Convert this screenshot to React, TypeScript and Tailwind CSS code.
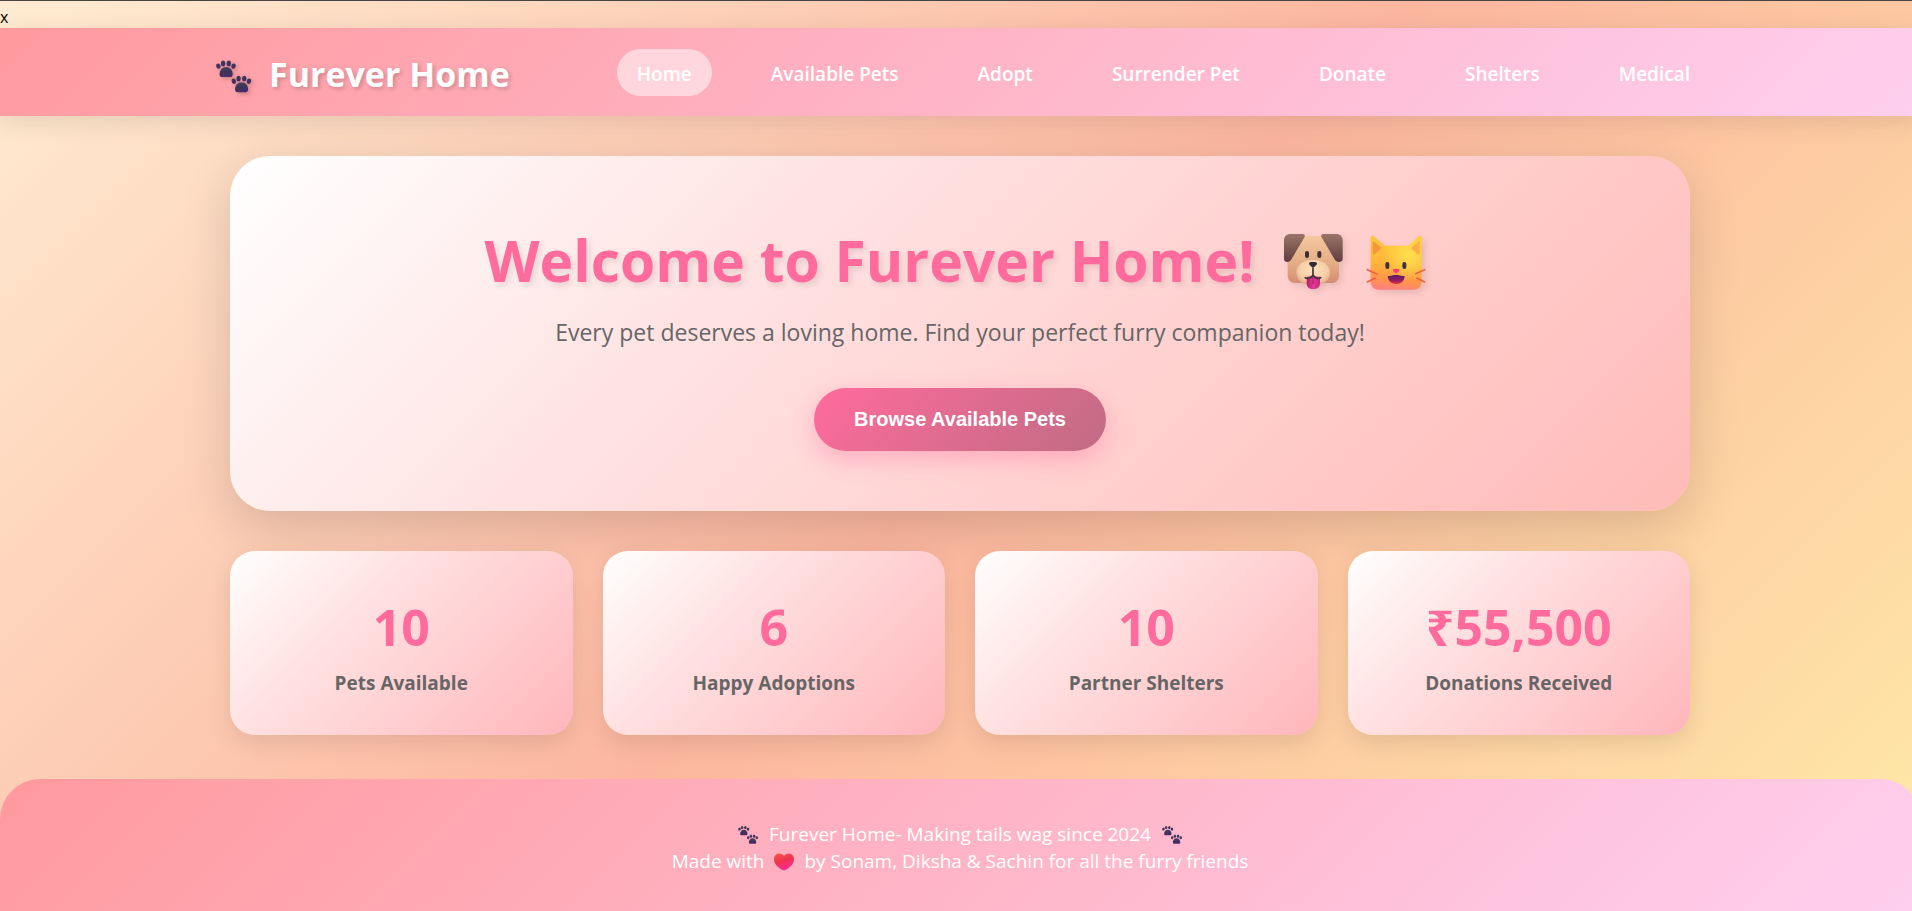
import React, { useState } from "react";

const navItems = [
  { id: "home", label: "Home" },
  { id: "pets", label: "Available Pets" },
  { id: "adopt", label: "Adopt" },
  { id: "surrender", label: "Surrender Pet" },
  { id: "donate", label: "Donate" },
  { id: "shelters", label: "Shelters" },
  { id: "medical", label: "Medical" },
];

const stats = [
  { value: "10", label: "Pets Available" },
  { value: "6", label: "Happy Adoptions" },
  { value: "10", label: "Partner Shelters" },
  { value: "₹55,500", label: "Donations Received" },
];

function Paw() {
  return (
    <>
      <ellipse cx="59" cy="63" rx="6.5" ry="8" transform="rotate(-15 59 63)" />
      <ellipse cx="73" cy="55" rx="6.5" ry="8.5" />
      <ellipse cx="90" cy="55" rx="6.5" ry="8.5" />
      <ellipse cx="104" cy="63" rx="6.5" ry="8" transform="rotate(15 104 63)" />
      <path d="M82 66c-12 0-19 9-19.500 21 0 6 3 8.500 8 8.500h23c5 0 8-2.500 8-8.500C101 75 94 66 82 66z" />
    </>
  );
}

function PawPrints({ id, className }: { id: string; className?: string }) {
  return (
    <svg viewBox="46 42 116 104" className={className} aria-hidden="true">
      <defs>
        <linearGradient id={id} x1="0" y1="0" x2="0.3" y2="1">
          <stop offset="0" stopColor="#45415a" />
          <stop offset="0.6" stopColor="#3e3457" />
          <stop offset="1" stopColor="#4b2a6b" />
        </linearGradient>
      </defs>
      <g fill={`url(#${id})`}>
        <Paw />
        <g transform="translate(46 45)">
          <Paw />
        </g>
      </g>
    </svg>
  );
}

function DogFace({ className }: { className?: string }) {
  return (
    <svg viewBox="120 66 198 180" className={className} aria-hidden="true">
      <defs>
        <linearGradient id="dogHead" x1="0" y1="0" x2="0" y2="1">
          <stop offset="0" stopColor="#f5c8a0" />
          <stop offset="0.6" stopColor="#e2ac84" />
          <stop offset="1" stopColor="#d68d72" />
        </linearGradient>
        <radialGradient id="dogMuzzle" cx="0.5" cy="0.4" r="0.6">
          <stop offset="0" stopColor="#ffe2bd" />
          <stop offset="0.7" stopColor="#f6cda5" />
          <stop offset="1" stopColor="#e2a98a" />
        </radialGradient>
        <linearGradient id="dogEar" x1="0" y1="0" x2="0" y2="1">
          <stop offset="0" stopColor="#9a7468" />
          <stop offset="0.5" stopColor="#7f5a53" />
          <stop offset="1" stopColor="#5f3c3e" />
        </linearGradient>
        <linearGradient id="dogTongue" x1="0" y1="0" x2="1" y2="0">
          <stop offset="0" stopColor="#b81d6c" />
          <stop offset="0.5" stopColor="#e23a94" />
          <stop offset="1" stopColor="#c42478" />
        </linearGradient>
      </defs>
      <path d="M176 78h86c22 0 35 16 35 38v80c0 14-8 23-22 23H165c-14 0-22-9-22-23v-80c0-22 11-38 33-38z" fill="url(#dogHead)" />
      <path d="M152 72h35c8 0 9 5 5 12l-39 66c-6 9-21 8-21-4V93c0-14 7-21 20-21z" fill="url(#dogEar)" />
      <path d="M288 72h-37c-8 0-9 5-5 12l39 66c6 9 23 8 23-4V93c0-14-7-21-20-21z" fill="url(#dogEar)" />
      <path d="M219 150c30 0 51 14 51 38 0 23-20 38-51 38s-50-15-50-38c0-24 20-38 50-38z" fill="url(#dogMuzzle)" />
      <rect x="195" y="123" width="12" height="21" rx="6" fill="#3b3038" />
      <rect x="232" y="123" width="12" height="21" rx="6" fill="#3b3038" />
      <path d="M200 200c7 2 14-1 19-7 5 6 13 9 21 7v18c0 12-7 19-20 19s-20-7-20-19z" fill="url(#dogTongue)" />
      <path d="M219 203v18" stroke="#a91663" strokeWidth="3" strokeLinecap="round" />
      <path d="M196 203c9 5 20 0 23-8V175M242 203c-9 5-20 0-23-8" fill="none" stroke="#3b3038" strokeWidth="5" strokeLinecap="round" />
      <path d="M214 156h10c7 0 9 5 5 9l-6 6c-3 3-5 3-8 0l-6-6c-4-4-2-9 5-9z" fill="#332b35" />
    </svg>
  );
}

function CatFace({ className }: { className?: string }) {
  return (
    <svg viewBox="370 66 192 180" className={className} aria-hidden="true">
      <defs>
        <linearGradient id="catHead" x1="0.3" y1="0" x2="0.2" y2="1">
          <stop offset="0" stopColor="#ffc83a" />
          <stop offset="0.5" stopColor="#ffb63a" />
          <stop offset="0.8" stopColor="#ff964a" />
          <stop offset="1" stopColor="#ff7d83" />
        </linearGradient>
        <radialGradient id="catGlow" cx="0.75" cy="0.35" r="0.5">
          <stop offset="0" stopColor="#ffe04f" />
          <stop offset="1" stopColor="#ffe04f" stopOpacity="0" />
        </radialGradient>
        <linearGradient id="catMouth" x1="0" y1="0" x2="0" y2="1">
          <stop offset="0" stopColor="#5c1a68" />
          <stop offset="0.55" stopColor="#8b1c62" />
          <stop offset="1" stopColor="#ef2a3c" />
        </linearGradient>
      </defs>
      <path d="M400 79l31 28h72l31-28c5-4 9-1 9 5v128c0 17-9 27-26 27H416c-17 0-26-10-26-27V84c0-7 5-9 10-5z" fill="url(#catHead)" />
      <path d="M400 79l31 28h72l31-28c5-4 9-1 9 5v128c0 17-9 27-26 27H416c-17 0-26-10-26-27V84c0-7 5-9 10-5z" fill="url(#catGlow)" />
      <path d="M396 92v36c0 5 3 7 7 4l20-18z" fill="#f5963a" />
      <path d="M537 92v36c0 5-3 7-7 4l-20-18z" fill="#ffae45" />
      <rect x="434" y="156" width="12" height="21" rx="6" fill="#43303a" />
      <rect x="485" y="156" width="12" height="21" rx="6" fill="#43303a" />
      <path d="M461 177h11c5 0 5 5 2 8l-5 4c-2 2-3 2-5 0l-5-4c-3-3-3-8 2-8z" fill="#ff3c78" />
      <path d="M441 198c8 0 14-1 18-3h14c5 2 11 3 19 3-1 15-11 24-25 24s-25-9-26-24z" fill="url(#catMouth)" />
      <g stroke="#e8643f" strokeWidth="5" strokeLinecap="round">
        <path d="M380 179l29 13M380 216l24-12M552 179l-27 12M552 216l-24-12" />
      </g>
    </svg>
  );
}

function Heart({ className }: { className?: string }) {
  return (
    <svg viewBox="0 0 40 34" className={className} aria-hidden="true">
      <defs>
        <linearGradient id="heartFill" x1="0.2" y1="0" x2="0.6" y2="1">
          <stop offset="0" stopColor="#f8544c" />
          <stop offset="0.45" stopColor="#f0334f" />
          <stop offset="1" stopColor="#ff2c9c" />
        </linearGradient>
      </defs>
      <path d="M11 0c4 0 7 2 9 5 2-3 5-5 9-5 7 0 11 5 11 12 0 9-9 17-17 21-2 1-4 1-6 0C9 29 0 21 0 12 0 5 4 0 11 0z" fill="url(#heartFill)" />
    </svg>
  );
}

export default function App() {
  const [current, setCurrent] = useState("home");

  return (
    <div className="overflow-hidden font-['Open_Sans','Noto_Sans',sans-serif]">
      <div className="-mr-2 min-h-screen border-t border-[#444] bg-linear-[135deg,#ffecd2_0%,#fcb69f_50%,#ffeaa7_100%]">
        <p className="h-[27px] text-base leading-8 text-black">x</p>

        {/* Header */}
        <header className="bg-linear-[135deg,#ff9a9e_0%,#fecfef_100%] shadow-[0_6px_24px_rgba(0,0,0,0.1)]">
          <div className="mx-auto flex h-[88px] max-w-[1500px] items-center justify-between">
            <a href="#home" className="flex items-center gap-4 pt-1 pl-1 text-[34px] leading-[48px] font-bold text-white text-shadow-[2px_2px_4px_rgba(0,0,0,0.2)]">
              <PawPrints id="pawLogo" className="mt-1 h-[35px] w-[39px] drop-shadow-[2px_2px_2px_rgba(0,0,0,0.2)]" />
              Furever Home
            </a>
            <nav className="flex gap-[39px]">
              {navItems.map((item) => (
                <a
                  key={item.id}
                  href={`#${item.id}`}
                  onClick={() => setCurrent(item.id)}
                  className={`rounded-[25px] px-5 pt-3 pb-2 text-[19px] leading-[27px] font-semibold text-white transition-colors ${
                    current === item.id ? "bg-white/50" : "hover:bg-white/30"
                  }`}
                >
                  {item.label}
                </a>
              ))}
            </nav>
          </div>
        </header>

        <main className="mx-auto max-w-[1500px] px-5 pt-10 pb-11">
          {/* Hero */}
          <section className="flex flex-col items-center rounded-[40px] bg-linear-[135deg,#ffffff_0%,#ffe3e3_34%,#ffbbb8_100%] px-10 py-[60px] text-center shadow-[0_15px_50px_rgba(0,0,0,0.15)]">
            <h1 className="flex items-center gap-[25px] pt-1 pr-2 text-[57px] leading-[80px] font-bold text-[#ff6b9d] text-shadow-[3px_3px_6px_rgba(0,0,0,0.1)]">
              Welcome to Furever Home!
              <span className="flex gap-[18px] pt-1">
                <DogFace className="h-[60px] w-[66px] drop-shadow-[3px_3px_3px_rgba(0,0,0,0.1)]" />
                <CatFace className="h-[60px] w-[64px] drop-shadow-[3px_3px_3px_rgba(0,0,0,0.1)]" />
              </span>
            </h1>
            <p className="mt-4 text-[23px] leading-8 text-[#666]">
              Every pet deserves a loving home. Find your perfect furry companion today!
            </p>
            <button
              type="button"
              onClick={() => setCurrent("pets")}
              className="mt-10 rounded-[32px] bg-linear-[135deg,#ff6b9d_0%,#c06c84_100%] px-10 py-5 font-['Liberation_Sans',sans-serif] text-[20px] leading-[23px] font-bold text-white shadow-[0_8px_25px_rgba(255,107,157,0.4)]"
            >
              Browse Available Pets
            </button>
          </section>

          {/* Stats */}
          <section className="mt-10 grid grid-cols-4 gap-[30px]">
            {stats.map((stat) => (
              <div
                key={stat.label}
                className="rounded-[25px] bg-linear-[135deg,#ffffff_0%,#ffe1e1_36%,#ffb6bb_100%] pt-10 pb-[38px] text-center shadow-[0_8px_25px_rgba(0,0,0,0.1)]"
              >
                <div className="text-[50px] leading-[72px] font-bold text-[#ff6b9d]">{stat.value}</div>
                <div className="mt-1.5 text-[19px] leading-7 font-bold text-[#666]">{stat.label}</div>
              </div>
            ))}
          </section>
        </main>

        {/* Footer */}
        <footer className="rounded-t-[40px] bg-linear-[135deg,#ff9a9e_0%,#fecfef_100%] pt-[42px] pb-[38px] text-center text-[19px] leading-[27px] text-white">
          <p className="flex items-center justify-center gap-2.5">
            <PawPrints id="pawLeft" className="h-5 w-[22px]" />
            Furever Home- Making tails wag since 2024
            <PawPrints id="pawRight" className="h-5 w-[22px]" />
          </p>
          <p className="flex items-center justify-center gap-2.5">
            Made with
            <Heart className="h-[18px] w-5" />
            by Sonam, Diksha &amp; Sachin for all the furry friends
          </p>
        </footer>
      </div>
    </div>
  );
}
